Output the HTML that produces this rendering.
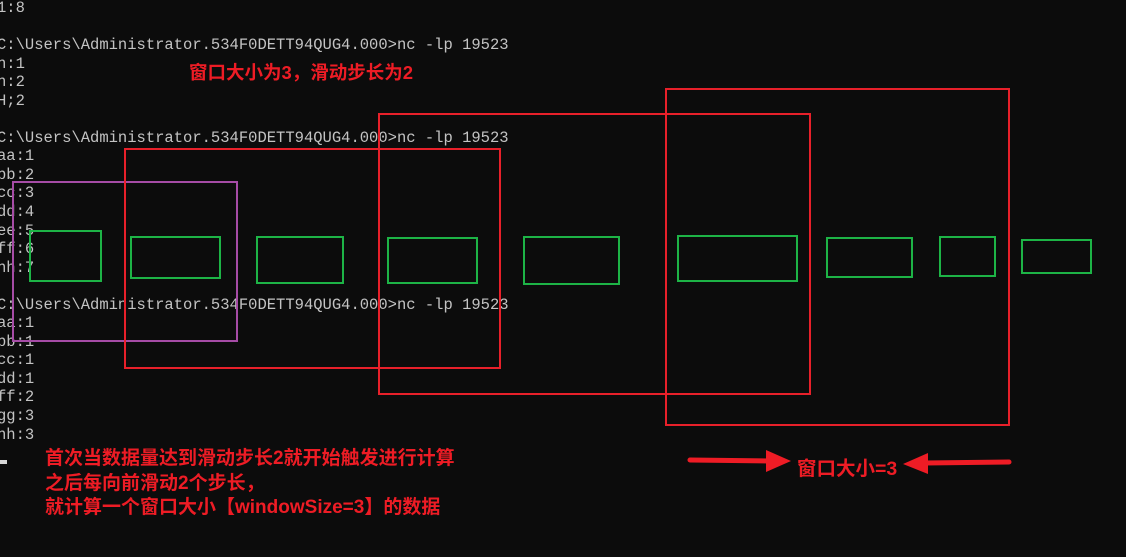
<!DOCTYPE html>
<html><head><meta charset="utf-8"><style>
html,body{margin:0;padding:0;background:#0c0c0c;width:1126px;height:557px;overflow:hidden;position:relative}
.t{position:absolute;left:-3px;top:-1px;font-family:"Liberation Mono",monospace;font-size:15.5px;line-height:18.55px;color:#c3c3c3;white-space:pre;margin:0}
.b{position:absolute;box-sizing:border-box}
.r{border:2px solid #e8202a}
.g{border:2px solid #1db446}
.p{border:2px solid #a64ca6}
.a{position:absolute;font-family:"Liberation Sans","Noto Sans CJK SC",sans-serif;font-weight:bold;color:#ee1c25;font-size:19px;white-space:pre}
</style></head><body>
<pre class="t">1:8

C:\Users\Administrator.534F0DETT94QUG4.000&gt;nc -lp 19523
h:1
h:2
H;2

C:\Users\Administrator.534F0DETT94QUG4.000&gt;nc -lp 19523
aa:1
bb:2
cc:3
dd:4
ee:5
ff:6
hh:7

C:\Users\Administrator.534F0DETT94QUG4.000&gt;nc -lp 19523
aa:1
bb:1
cc:1
dd:1
ff:2
gg:3
hh:3</pre>
<div style="position:absolute;left:0;top:460px;width:7px;height:4px;background:#d8d8d8"></div>
<div class="b p" style="left:12px;top:181px;width:226px;height:161px"></div>
<div class="b r" style="left:124px;top:148px;width:377px;height:221px"></div>
<div class="b r" style="left:378px;top:113px;width:433px;height:282px"></div>
<div class="b r" style="left:665px;top:88px;width:345px;height:338px"></div>
<div class="b g" style="left:29px;top:230px;width:73px;height:52px"></div>
<div class="b g" style="left:130px;top:236px;width:91px;height:43px"></div>
<div class="b g" style="left:256px;top:236px;width:88px;height:48px"></div>
<div class="b g" style="left:387px;top:237px;width:91px;height:47px"></div>
<div class="b g" style="left:523px;top:236px;width:97px;height:49px"></div>
<div class="b g" style="left:677px;top:235px;width:121px;height:47px"></div>
<div class="b g" style="left:826px;top:237px;width:87px;height:41px"></div>
<div class="b g" style="left:939px;top:236px;width:57px;height:41px"></div>
<div class="b g" style="left:1021px;top:239px;width:71px;height:35px"></div>
<div class="a" style="left:189px;top:59px;font-size:18.5px">窗口大小为3，滑动步长为2</div>
<div class="a" style="left:45px;top:447px;line-height:24.5px">首次当数据量达到滑动步长2就开始触发进行计算
之后每向前滑动2个步长，
就计算一个窗口大小【windowSize=3】的数据</div>
<div class="a" style="left:797px;top:452px;font-size:19.5px">窗口大小=3</div>
<svg style="position:absolute;left:0;top:0" width="1126" height="557">
<line x1="690" y1="460" x2="770" y2="461" stroke="#ee1c25" stroke-width="5" stroke-linecap="round"/>
<polygon points="766,450 791,461 766,472" fill="#ee1c25"/>
<line x1="1009" y1="462" x2="925" y2="463" stroke="#ee1c25" stroke-width="5" stroke-linecap="round"/>
<polygon points="928,453 903,464 928,474" fill="#ee1c25"/>
</svg>
</body></html>
